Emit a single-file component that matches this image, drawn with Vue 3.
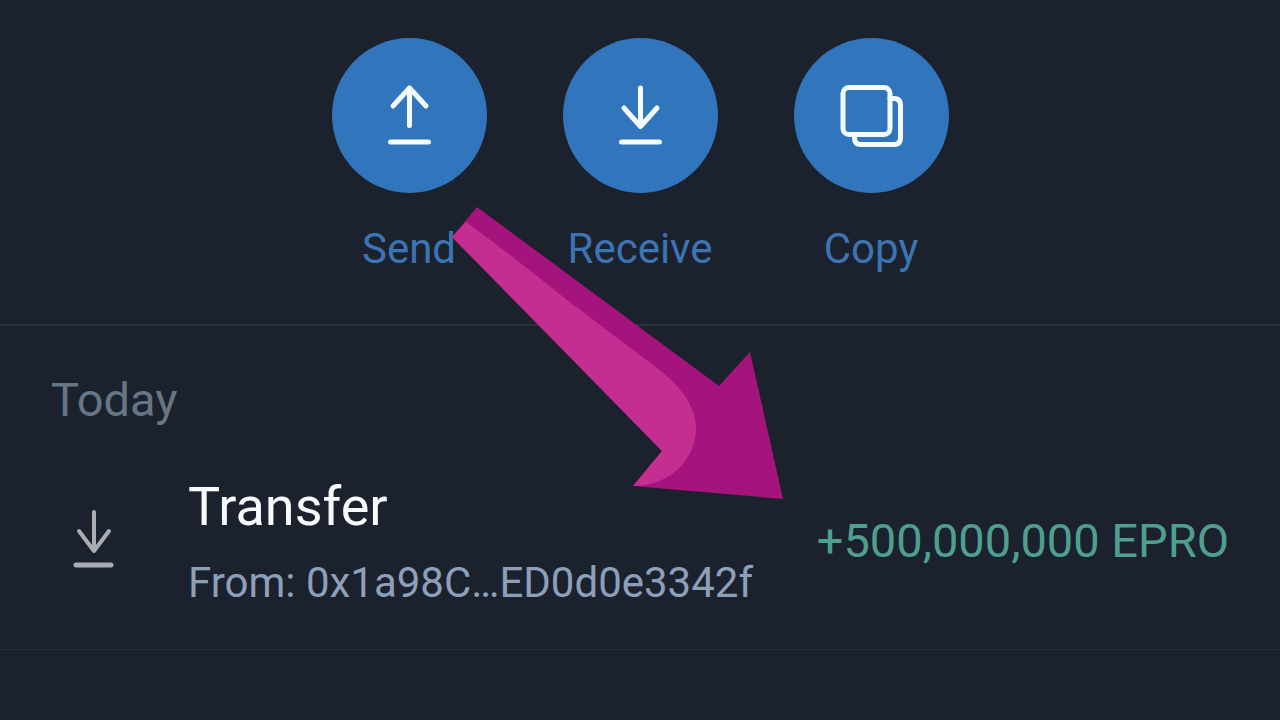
<script setup>
const actions = [
  { id: 'send', label: 'Send' },
  { id: 'receive', label: 'Receive' },
  { id: 'copy', label: 'Copy' },
]
const transfers = [
  { title: 'Transfer', from: 'From: 0x1a98C…ED0d0e3342f', amount: '+500,000,000 EPRO' },
]
</script>

<template>
  <main class="wallet">
    <nav class="actions" aria-label="Wallet actions">
      <button v-for="a in actions" :key="a.id" class="action" type="button">
        <span class="disc">
          <svg v-if="a.id === 'send'" viewBox="0 0 155 155" aria-hidden="true">
            <path d="M77.500 87.500V50M61 68L77.500 50L94 68M58.500 104H96.500" />
          </svg>
          <svg v-else-if="a.id === 'receive'" viewBox="0 0 155 155" aria-hidden="true">
            <path d="M77.500 50V87.500M61 70L77.500 88.500L94 70M58.500 104H96.500" />
          </svg>
          <svg v-else viewBox="0 0 155 155" aria-hidden="true">
            <rect x="49" y="49.500" width="47" height="47" rx="6" />
            <path d="M96 60.500H100Q106.500 60.500 106.500 67V100Q106.500 106.500 100 106.500H67Q60.500 106.500 60.500 100V96.500" />
          </svg>
        </span>
        <span class="label">{{ a.label }}</span>
      </button>
    </nav>

    <section class="history">
      <h2 class="day">Today</h2>
      <article v-for="t in transfers" :key="t.from" class="row">
        <svg class="incoming" viewBox="0 0 42 64" aria-hidden="true">
          <path d="M21 3V42M6 22L21 42L36 22" />
          <path class="base" d="M3 56H38" />
        </svg>
        <div class="details">
          <h3 class="title">{{ t.title }}</h3>
          <p class="from">{{ t.from }}</p>
        </div>
        <p class="amount">{{ t.amount }}</p>
      </article>
    </section>

    <svg class="pointer" viewBox="0 0 332 293" aria-hidden="true">
      <path fill="#a5147d" d="M25 0L267 179L298 145L331 292L181 279L210 244L0 30Z" />
      <path fill="#c42e91" d="M14 15Q62 50 115 93L205 161C228 178 245 200 244 224C242 255 216 279 181 279L210 244L0 30Z" />
    </svg>
  </main>
</template>

<style>
body {
  background: #1b222d;
}
</style>

<style scoped>
.wallet {
  position: relative;
  min-height: 100vh;
  box-sizing: border-box;
  overflow: hidden;
  background: #1b222d;
  font-family: Roboto, "Liberation Sans", sans-serif;
}
.actions {
  display: flex;
  justify-content: center;
  gap: 76px;
  padding: 38px 0 51px;
  border-bottom: 2px solid #29333f;
}
.action {
  display: flex;
  flex-direction: column;
  align-items: center;
  gap: 32px;
  width: 155px;
  padding: 0;
  border: 0;
  background: none;
  color: #3c74b4;
  font: 42px/48px Roboto, "Liberation Sans", sans-serif;
  cursor: pointer;
}
.disc {
  width: 155px;
  height: 155px;
  border-radius: 50%;
  background: #3176bd;
}
.disc svg {
  display: block;
  fill: none;
  stroke: #f4fbff;
  stroke-width: 5;
  stroke-linecap: round;
  stroke-linejoin: round;
}
.label {
  white-space: nowrap;
}
.day,
.title,
.from,
.amount {
  margin: 0;
  font-weight: 400;
}
.day {
  padding: 46px 51px 47px;
  color: #677685;
  font-size: 47px;
  line-height: 56px;
}
.row {
  display: flex;
  align-items: center;
  padding: 0 51px 42px 73px;
  border-bottom: 1px solid #27303b;
}
.incoming {
  flex: none;
  width: 42px;
  height: 64px;
  margin-right: 73px;
  fill: none;
  stroke: #a9adb1;
  stroke-width: 4;
  stroke-linecap: round;
  stroke-linejoin: round;
}
.base {
  stroke-width: 5;
}
.details {
  flex: 1;
  min-width: 0;
}
.title {
  margin-bottom: 20px;
  color: #f8fafd;
  font-size: 54px;
  line-height: 64px;
}
.from {
  color: #8e9fba;
  font-size: 42px;
  line-height: 48px;
  white-space: nowrap;
}
.amount {
  color: #4f9f91;
  font-size: 47px;
  line-height: 56px;
  white-space: nowrap;
}
/* Annotation lying over the page, tied to its centre line */
.pointer {
  position: absolute;
  top: 207px;
  left: calc(50% - 188px);
  width: 332px;
  height: 293px;
  pointer-events: none;
}
</style>
